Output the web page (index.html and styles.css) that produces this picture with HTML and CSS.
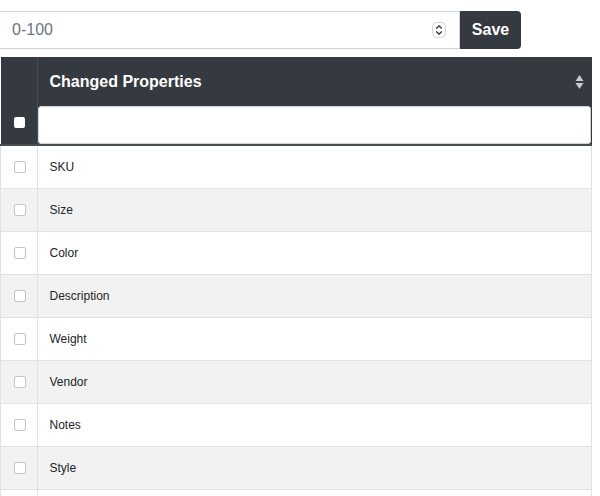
FILE: index.html
```html
<!DOCTYPE html>
<html>
<head>
<meta charset="utf-8">
<link rel="stylesheet" href="styles.css">
</head>
<body>
<div class="bar">
  <div class="num-input">
    <span class="placeholder">0-100</span>
    <svg class="spin" width="14" height="16" viewBox="0 0 14 16">
      <rect x="0.5" y="0.5" width="13" height="15" rx="4" fill="#fff" stroke="#d4d4d4"/>
      <path d="M4.2 6.6 L7 4 L9.8 6.6" fill="none" stroke="#333" stroke-width="1.3"/>
      <path d="M4.2 9.4 L7 12 L9.8 9.4" fill="none" stroke="#333" stroke-width="1.3"/>
    </svg>
  </div>
  <button class="save">Save</button>
</div>
<table class="grid">
  <thead>
    <tr>
      <th class="sel-head" rowspan="2"><span class="hcheck"></span></th>
      <th class="title">
        <div class="title-inner">
          <span>Changed Properties</span>
          <svg class="sort" width="9" height="16" viewBox="0 0 9 16">
            <path d="M4.5 1 L8.5 7 L0.5 7 Z" fill="#c8cbce"/>
            <path d="M4.5 15 L8.5 9 L0.5 9 Z" fill="#c8cbce"/>
          </svg>
        </div>
      </th>
    </tr>
    <tr>
      <th class="filter"><div class="filter-box"></div></th>
    </tr>
  </thead>
  <tbody>
    <tr><td class="sel"><span class="check"></span></td><td class="name">SKU</td></tr>
    <tr><td class="sel"><span class="check"></span></td><td class="name">Size</td></tr>
    <tr><td class="sel"><span class="check"></span></td><td class="name">Color</td></tr>
    <tr><td class="sel"><span class="check"></span></td><td class="name">Description</td></tr>
    <tr><td class="sel"><span class="check"></span></td><td class="name">Weight</td></tr>
    <tr><td class="sel"><span class="check"></span></td><td class="name">Vendor</td></tr>
    <tr><td class="sel"><span class="check"></span></td><td class="name">Notes</td></tr>
    <tr><td class="sel"><span class="check"></span></td><td class="name">Style</td></tr>
    <tr><td class="sel"></td><td class="name"></td></tr>
  </tbody>
</table>
</body>
</html>
```
FILE: styles.css
```css
html, body {
  margin: 0;
  padding: 0;
  background: #fff;
  font-family: "Liberation Sans", Arial, sans-serif;
  overflow: hidden;
}
.bar {
  display: flex;
  margin-top: 11px;
  height: 38px;
}
.num-input {
  box-sizing: border-box;
  width: 460px;
  height: 38px;
  border: 1px solid #ced4da;
  border-left: none;
  display: flex;
  align-items: center;
  justify-content: space-between;
  padding: 0 13px 0 12px;
}
.placeholder {
  font-size: 16px;
  color: #6c757d;
}
.spin {
  display: block;
}
.save {
  box-sizing: border-box;
  width: 61px;
  height: 38px;
  border: none;
  background: #343a40;
  color: #fff;
  font-family: "Liberation Sans", Arial, sans-serif;
  font-size: 16px;
  font-weight: bold;
  border-radius: 0 4px 4px 0;
  padding: 0;
}
.grid {
  margin-top: 8px;
  width: 592px;
  border-collapse: collapse;
  table-layout: fixed;
}
.grid th {
  background: #343a40;
  padding: 0;
}
.sel-head {
  width: 36px;
  border-right: 1px solid #454d55;
  border-bottom: 2px solid #454d55;
  vertical-align: bottom;
  text-align: center;
}
.hcheck {
  display: block;
  width: 11px;
  height: 11px;
  margin: 0 auto 16px 13px;
  background: #fff;
  border-radius: 2px;
}
.title {
  height: 49px;
  text-align: left;
  vertical-align: middle;
  border-right: 1px solid #343a40;
}
.title-inner {
  display: flex;
  align-items: center;
  justify-content: space-between;
  padding: 0 7px 0 12px;
  color: #fff;
  font-size: 16px;
  font-weight: bold;
}
.sort {
  display: block;
  margin-top: 1px;
}
.filter {
  height: 38px;
  border-bottom: 2px solid #454d55;
}
.filter-box {
  box-sizing: border-box;
  height: 38px;
  margin-right: 1px;
  background: #fff;
  border: 1px solid #ced4da;
  border-radius: 3px;
}
.grid td {
  height: 42px;
  padding: 0;
  border: 1px solid #dee2e6;
  border-top: none;
  font-size: 12px;
  color: #212529;
}
.grid tbody tr:nth-child(even) td {
  background: #f2f2f2;
}
.sel {
  text-align: left;
}
.check {
  display: block;
  box-sizing: border-box;
  width: 12px;
  height: 12px;
  margin-left: 13px;
  border: 1px solid #c4c4c4;
  border-radius: 2px;
  background: #fff;
}
.name {
  padding-left: 12px !important;
}
```
